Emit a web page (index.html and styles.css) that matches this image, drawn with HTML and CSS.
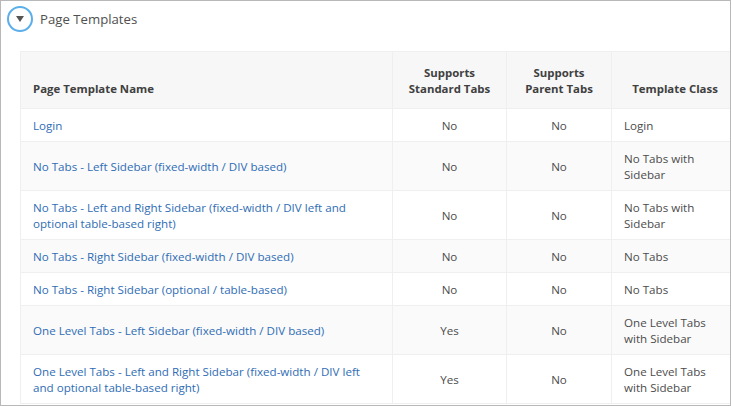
FILE: index.html
```html
<!DOCTYPE html>
<html lang="en">
<head>
    <meta charset="UTF-8">
    <title>Page Templates</title>
    <link rel="stylesheet" href="styles.css">
</head>
<body>
    <div class="region">
        <!-- Region Header -->
        <div class="region-header">
            <span class="toggle">
                <svg width="8" height="6" viewBox="0 0 8 6"><polygon points="0,0 8,0 4,6" fill="#555"/></svg>
            </span>
            <h2>Page Templates</h2>
        </div>
        <!-- Report -->
        <table class="report">
            <colgroup>
                <col class="col-name">
                <col class="col-std">
                <col class="col-parent">
                <col class="col-class">
            </colgroup>
            <thead>
                <tr>
                    <th class="left">Page Template Name</th>
                    <th>Supports<br>Standard Tabs</th>
                    <th>Supports<br>Parent Tabs</th>
                    <th>Template Class</th>
                </tr>
            </thead>
            <tbody>
                <tr>
                    <td><a href="#">Login</a></td>
                    <td class="center">No</td>
                    <td class="center">No</td>
                    <td>Login</td>
                </tr>
                <tr>
                    <td><a href="#">No Tabs - Left Sidebar (fixed-width / DIV based)</a></td>
                    <td class="center">No</td>
                    <td class="center">No</td>
                    <td>No Tabs with Sidebar</td>
                </tr>
                <tr>
                    <td><a href="#">No Tabs - Left and Right Sidebar (fixed-width / DIV left and optional table-based right)</a></td>
                    <td class="center">No</td>
                    <td class="center">No</td>
                    <td>No Tabs with Sidebar</td>
                </tr>
                <tr>
                    <td><a href="#">No Tabs - Right Sidebar (fixed-width / DIV based)</a></td>
                    <td class="center">No</td>
                    <td class="center">No</td>
                    <td>No Tabs</td>
                </tr>
                <tr>
                    <td><a href="#">No Tabs - Right Sidebar (optional / table-based)</a></td>
                    <td class="center">No</td>
                    <td class="center">No</td>
                    <td>No Tabs</td>
                </tr>
                <tr>
                    <td><a href="#">One Level Tabs - Left Sidebar (fixed-width / DIV based)</a></td>
                    <td class="center">Yes</td>
                    <td class="center">No</td>
                    <td>One Level Tabs with Sidebar</td>
                </tr>
                <tr>
                    <td><a href="#">One Level Tabs - Left and Right Sidebar (fixed-width / DIV left and optional table-based right)</a></td>
                    <td class="center">Yes</td>
                    <td class="center">No</td>
                    <td>One Level Tabs with Sidebar</td>
                </tr>
            </tbody>
        </table>
    </div>
</body>
</html>
```

FILE: styles.css
```css
/* Global Styling */
html, body {
    margin: 0;
    height: 100%;
    overflow: hidden;
    background-color: #ffffff;
}
body {
    font-family: "Open Sans", "Noto Sans", sans-serif;
    font-size: 11.6px;
    color: #4c4c4c;
}
/* Region */
.region {
    box-sizing: border-box;
    width: 731px;
    height: 406px;
    border: 1px solid #b8b8b8;
    overflow: hidden;
    padding: 0 0 0 19px;
}
.region-header {
    display: flex;
    align-items: center;
    height: 50px;
    margin-left: -13px;
    padding-bottom: 14px;
    box-sizing: border-box;
    gap: 7px;
}
.region-header h2 {
    margin: 0;
    font-size: 13.2px;
    font-weight: 400;
    color: #505050;
}
.toggle {
    box-sizing: border-box;
    display: flex;
    align-items: center;
    justify-content: center;
    width: 26px;
    height: 26px;
    border: 2px solid #5aaeea;
    border-radius: 50%;
}
/* Report */
.report {
    border-collapse: collapse;
    table-layout: fixed;
    width: 718px;
}
.col-name { width: 372px; }
.col-std { width: 114px; }
.col-parent { width: 105px; }
.col-class { width: 127px; }
.report th, .report td {
    border: 1px solid #efefef;
    padding: 9px 12px 7px;
    line-height: 16px;
}
.report th {
    background-color: #f7f7f7;
    color: #404040;
    font-size: 11.4px;
    font-weight: 700;
    text-align: center;
    vertical-align: bottom;
    padding-top: 13px;
    padding-bottom: 11px;
}
.report th.left {
    text-align: left;
}
.report tbody tr:nth-child(even) td {
    background-color: #fafafa;
}
.report a {
    color: #2f6db5;
    text-decoration: none;
}
.center {
    text-align: center;
}
```
